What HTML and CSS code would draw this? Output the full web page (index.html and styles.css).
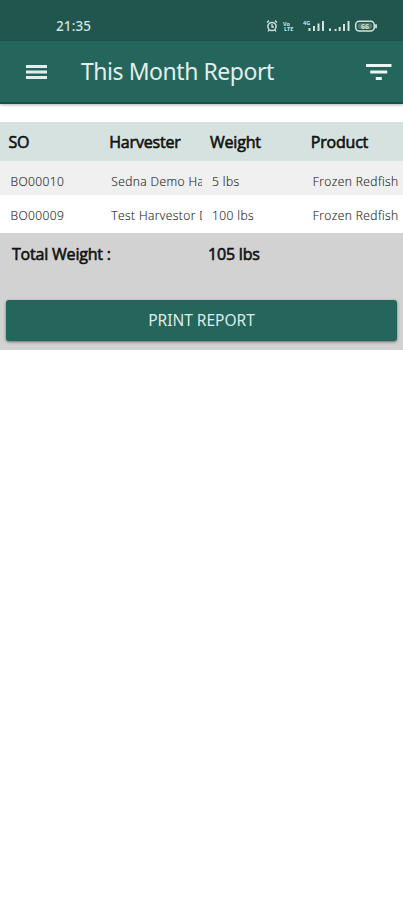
FILE: index.html
```html
<!DOCTYPE html>
<html lang="en">
  <head>
    <meta charset="UTF-8" />
    <meta name="viewport" content="width=device-width, initial-scale=1.0" />
    <title>This Month Report</title>
    <link rel="stylesheet" href="styles.css">
  </head>
  <body>
    <div class="status-bar">
      <span class="clock">21:35</span>
      <svg class="status-icons" width="114" height="16" viewBox="0 0 114 16" fill="none" stroke="#d3e3df">
        <!-- alarm -->
        <circle cx="6" cy="8.5" r="4.1" stroke-width="1.5" />
        <path d="M6 6v3h2M1 4.500l2-2M11 4.500l-2-2M3 12l-1 1.500M9 12l1 1.500" stroke-width="1.3" />
        <!-- VoLTE -->
        <g class="tiny">
          <text x="17" y="7.500">Vo</text>
          <text x="18" y="13">LTE</text>
          <text x="37" y="7.300">4G</text>
        </g>
        <!-- signals -->
        <path d="M43.500 13v-3M48 13v-5M52.500 13V5.500M57 13V3" stroke-width="2" />
        <path d="M64 13v-2.500M69.500 13v-2M73.700 13v-4M78 13V6M82.500 13V3" stroke-width="2" />
        <!-- battery -->
        <rect x="89.700" y="3.200" width="18.500" height="9.800" rx="3.500" stroke-width="1.500" />
        <path d="M110 6.200v4" stroke-width="1.800" />
        <rect x="92" y="5.200" width="14" height="5.800" rx="2" fill="#527e75" stroke="none" />
        <text class="battery-level" x="95" y="10.600">66</text>
      </svg>
    </div>
    <header>
      <svg class="menu" width="21" height="16" viewBox="0 0 21 16" fill="#e3eeec">
        <path d="M0 1h21v3H0zM0 6.500h21v3H0zM0 12h21v3H0z" />
      </svg>
      <h1>This Month Report</h1>
      <svg class="filter" width="26" height="18" viewBox="0 0 26 18" fill="#eef6f4">
        <path d="M0 1h25.500v3H0zM4.200 7.500h17v3h-17zM9.800 14h6v3h-6z" />
      </svg>
    </header>
    <main>
      <table>
        <thead>
          <tr>
            <th>SO</th>
            <th>Harvester</th>
            <th>Weight</th>
            <th>Product</th>
          </tr>
        </thead>
        <tbody>
          <tr>
            <td><div class="cell">BO00010</div></td>
            <td><div class="cell">Sedna Demo Ha</div></td>
            <td><div class="cell">5 lbs</div></td>
            <td><div class="cell">Frozen Redfish</div></td>
          </tr>
          <tr>
            <td><div class="cell">BO00009</div></td>
            <td><div class="cell">Test Harvestor D</div></td>
            <td><div class="cell">100 lbs</div></td>
            <td><div class="cell">Frozen Redfish</div></td>
          </tr>
        </tbody>
      </table>
      <section class="summary">
        <div class="total">
          <span>Total Weight :</span>
          <span>105 lbs</span>
        </div>
        <button type="button">PRINT REPORT</button>
      </section>
    </main>
  </body>
</html>
```
FILE: styles.css
```css
* {
  box-sizing: border-box;
}
body {
  font-family: "Open Sans", "Noto Sans", sans-serif;
  margin: 0;
  background: #fff;
}
.status-bar {
  height: 41px;
  background: #20564d;
  color: #d3e3df;
  display: flex;
  justify-content: space-between;
  padding: 11px 23px 0 56px;
}
.clock {
  font-family: "Noto Sans", sans-serif;
  font-size: 13.5px;
  font-weight: 500;
  line-height: 31px;
  letter-spacing: 0.1px;
}
.status-icons {
  margin-top: 7px;
}
.tiny {
  font-size: 5.5px;
  font-weight: bold;
  fill: #d3e3df;
  stroke: none;
}
.battery-level {
  font-size: 7px;
  font-weight: bold;
  fill: #d3e3df;
  stroke: none;
}
header {
  height: 63px;
  background: #24665c;
  border-bottom: 2px solid #125347;
  box-shadow: 0 1px 3px rgba(0, 0, 0, 0.3);
  display: flex;
  align-items: center;
  padding: 0 11px 0 26px;
}
h1 {
  flex: 1;
  margin: -1px 0 0 34px;
  color: #e3eeec;
  font-family: "Noto Sans", sans-serif;
  font-size: 23px;
  font-weight: 400;
  letter-spacing: -0.45px;
  white-space: nowrap;
}
table {
  width: 100%;
  margin-top: 18px;
  border-collapse: collapse;
  table-layout: fixed;
}
th {
  height: 39px;
  padding: 0 0 0 8.5px;
  background: #d5e2df;
  color: #111;
  font-size: 16px;
  font-weight: 400;
  letter-spacing: -0.2px;
  text-align: left;
  -webkit-text-stroke: 0.6px #111;
}
td {
  height: 34px;
  padding: 7px 0 0 10.5px;
  color: #222;
  font-size: 12px;
  font-weight: 300;
  letter-spacing: 0.42px;
  -webkit-text-stroke: 0.15px #333;
}
tbody tr:nth-child(odd) {
  background: #f0f0f0;
}
tbody tr:last-child td {
  height: 38px;
  padding-top: 3px;
}
.cell {
  overflow: hidden;
  white-space: nowrap;
}
.summary {
  height: 117px;
  padding: 10px 6px 0;
  background: #d2d2d2;
}
.total {
  display: grid;
  grid-template-columns: 196px 1fr;
  height: 57px;
  padding-left: 6px;
  color: #111;
  font-size: 16px;
  font-weight: 400;
  letter-spacing: -0.2px;
  -webkit-text-stroke: 0.6px #111;
}
button {
  display: block;
  width: 391px;
  height: 41px;
  padding: 0 0 2px;
  border: 0;
  border-radius: 3px;
  background: #24665c;
  box-shadow: 0 1px 3px rgba(0, 0, 0, 0.5);
  color: #dfebe8;
  font-family: "Noto Sans", sans-serif;
  font-size: 15.5px;
}
```
